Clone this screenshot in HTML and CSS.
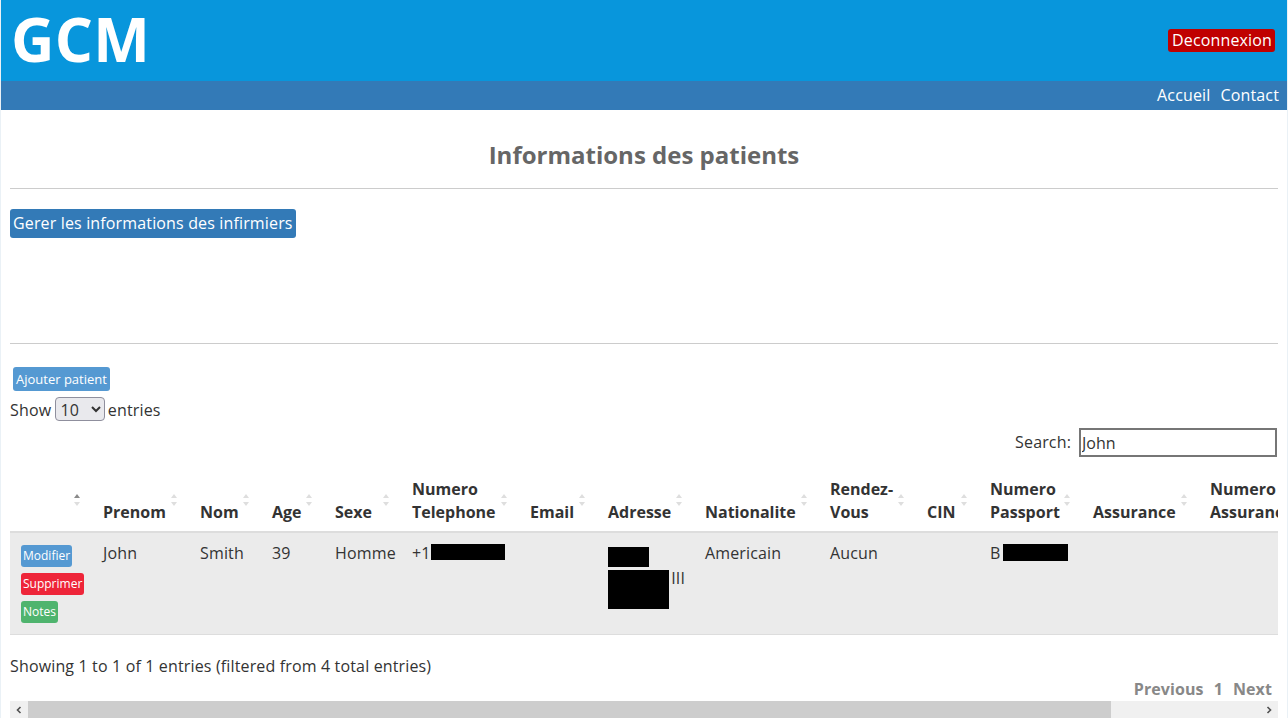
FILE: index.html
```html
<!DOCTYPE html>
<html lang="fr">
<head>
<meta charset="utf-8">
<title>GCM - Informations des patients</title>
<link rel="stylesheet" href="styles.css">
</head>
<body>
<div class="page">
  <header class="topbar">
    <h1 class="logo">GCM</h1>
    <a class="logout" href="#">Deconnexion</a>
  </header>
  <nav class="navbar">
    <a href="#">Accueil</a>
    <a href="#">Contact</a>
  </nav>
  <main class="content">
    <h2 class="title">Informations des patients</h2>
    <hr class="rule">
    <a class="btn-primary" href="#">Gerer les informations des infirmiers</a>
    <hr class="rule rule-low">
    <div class="dt-wrap">
      <a class="btn-add" href="#">Ajouter patient</a>
      <div class="dt-length">
        <label>Show <select><option>10</option><option>25</option><option>50</option></select> entries</label>
      </div>
      <div class="dt-filter">
        <label>Search:<input type="search" value="John"></label>
      </div>
      <div class="dt-scroll">
        <table class="dt">
          <colgroup>
            <col class="c1"><col class="c2"><col class="c3"><col class="c4"><col class="c5"><col class="c6"><col class="c7"><col class="c8"><col class="c9"><col class="c10"><col class="c11"><col class="c12"><col class="c13"><col class="c14"><col class="c15">
          </colgroup>
          <thead>
            <tr>
              <th class="sort-asc"></th>
              <th>Prenom</th>
              <th>Nom</th>
              <th>Age</th>
              <th>Sexe</th>
              <th>Numero Telephone</th>
              <th>Email</th>
              <th>Adresse</th>
              <th>Nationalite</th>
              <th>Rendez-Vous</th>
              <th>CIN</th>
              <th>Numero Passport</th>
              <th>Assurance</th>
              <th>Numero Assurance</th>
              <th>Allergies</th>
            </tr>
          </thead>
          <tbody>
            <tr>
              <td class="actions">
                <a class="mini mini-blue" href="#">Modifier</a>
                <a class="mini mini-red" href="#">Supprimer</a>
                <a class="mini mini-green" href="#">Notes</a>
              </td>
              <td>John</td>
              <td>Smith</td>
              <td>39</td>
              <td>Homme</td>
              <td>+1<span class="redact r-phone"></span></td>
              <td></td>
              <td class="addr">
                <div class="addr-line"><span class="redact r-a1"></span></div>
                <div class="addr-line"><span class="redact r-a2"></span><span class="addr-tail">III</span></div>
              </td>
              <td>Americain</td>
              <td>Aucun</td>
              <td></td>
              <td>B<span class="redact r-pass"></span></td>
              <td></td>
              <td></td>
              <td></td>
            </tr>
          </tbody>
        </table>
      </div>
      <div class="dt-info">Showing 1 to 1 of 1 entries (filtered from 4 total entries)</div>
      <div class="dt-paginate">
        <a href="#">Previous</a>
        <a href="#">1</a>
        <a href="#">Next</a>
      </div>
      <div class="hscroll">
        <span class="hs-btn">
          <svg width="8" height="8" viewBox="0 0 8 8"><path d="M5.5 1 L2.5 4 L5.5 7" fill="none" stroke="#505050" stroke-width="1.6"/></svg>
        </span>
        <span class="hs-thumb"></span>
        <span class="hs-track"></span>
        <span class="hs-btn">
          <svg width="8" height="8" viewBox="0 0 8 8"><path d="M2.5 1 L5.5 4 L2.5 7" fill="none" stroke="#505050" stroke-width="1.6"/></svg>
        </span>
      </div>
    </div>
  </main>
</div>
</body>
</html>
```

FILE: styles.css
```css
html, body {
  margin: 0;
  padding: 0;
  background: #ffffff;
}
body {
  font-family: "Open Sans", "Liberation Sans", sans-serif;
  font-size: 16px;
  color: #333333;
  line-height: 1.42857;
  letter-spacing: 0.15px;
  overflow: hidden;
}
a {
  text-decoration: none;
}
.page {
  width: 1286px;
  height: 718px;
  border-left: 1px solid #eaf1f6;
  border-right: 1px solid #eaf1f6;
  overflow: hidden;
}
.topbar {
  height: 81px;
  background: #0896dc;
  display: flex;
  align-items: center;
  justify-content: space-between;
  padding: 0 12px 0 10px;
}
.logo {
  margin: -4px 0 0 0;
  font-size: 60px;
  line-height: 80px;
  font-weight: 700;
  color: #ffffff;
  letter-spacing: 0.3px;
}
.logout {
  background: #c00000;
  color: #ffffff;
  font-size: 16px;
  line-height: 23px;
  padding: 0 3px 0 4px;
  border-radius: 3px;
}
.navbar {
  height: 29px;
  background: #337ab7;
  display: flex;
  justify-content: flex-end;
  align-items: center;
  gap: 10px;
  padding-right: 8px;
}
.navbar a {
  color: #ffffff;
  font-size: 16px;
  line-height: 23px;
}
.content {
  padding: 0 9px;
}
.title {
  margin: 28px 0 0 0;
  text-align: center;
  font-size: 24px;
  line-height: 33px;
  font-weight: 700;
  color: #666666;
  letter-spacing: 0;
}
.rule {
  border: 0;
  border-top: 1px solid #cccccc;
  margin: 17px 0 20px 0;
  height: 0;
}
.rule-low {
  margin: 105px 0 23px 0;
}
.btn-primary {
  display: inline-block;
  background: #337ab7;
  color: #ffffff;
  font-size: 16px;
  line-height: 23px;
  padding: 3px 3px;
  border-radius: 3px;
}
.dt-wrap {
  width: 1268px;
  overflow: hidden;
}
.btn-add {
  display: inline-block;
  margin-left: 3px;
  background: #5599d2;
  color: #ffffff;
  font-size: 13px;
  line-height: 18px;
  padding: 3px 3px;
  border-radius: 3px;
  letter-spacing: 0;
}
.dt-length {
  margin-top: 5px;
  height: 26px;
  display: flex;
  align-items: center;
}
.dt-length select {
  font-family: "Open Sans", "Liberation Sans", sans-serif;
  font-size: 16px;
  width: 50px;
  height: 24px;
  margin: 0 -1px;
  background: #e9e9ed;
  border: 1px solid #8f8f9d;
  border-radius: 4px;
  color: #333333;
  padding: 0 0 0 1px;
}
.dt-filter {
  margin-top: 6px;
  display: flex;
  justify-content: flex-end;
  padding-right: 1px;
}
.dt-filter label {
  display: flex;
  align-items: center;
}
.dt-filter input {
  font-family: "Open Sans", "Liberation Sans", sans-serif;
  font-size: 16px;
  width: 198px;
  height: 29px;
  box-sizing: border-box;
  border: 2px solid #767676;
  padding: 0 1px;
  margin-left: 8px;
  color: #333333;
  outline: none;
}
.dt-scroll {
  margin-top: 13px;
  overflow: hidden;
  width: 1268px;
}
.dt {
  width: 1432px;
  table-layout: fixed;
  border-collapse: collapse;
}
.c1 { width: 83px; }
.c2 { width: 97px; }
.c3 { width: 72px; }
.c4 { width: 63px; }
.c5 { width: 77px; }
.c6 { width: 118px; }
.c7 { width: 78px; }
.c8 { width: 97px; }
.c9 { width: 125px; }
.c10 { width: 97px; }
.c11 { width: 63px; }
.c12 { width: 103px; }
.c13 { width: 117px; }
.c14 { width: 112px; }
.c15 { width: 130px; }
.dt th {
  position: relative;
  text-align: left;
  vertical-align: bottom;
  font-weight: 700;
  padding: 8px 30px 7px 10px;
  border-bottom: 2px solid #dddddd;
  line-height: 23px;
  color: #333333;
  letter-spacing: 0;
  overflow: hidden;
}
.dt th::before,
.dt th::after {
  content: "";
  position: absolute;
  right: 13px;
  width: 0;
  height: 0;
  border-left: 3px solid transparent;
  border-right: 3px solid transparent;
}
.dt th::before {
  top: 24px;
  border-bottom: 4px solid #dedede;
}
.dt th::after {
  top: 32px;
  border-top: 4px solid #dedede;
}
.dt th.sort-asc::before {
  border-bottom-color: #8a8a8a;
}
.dt td {
  vertical-align: top;
  padding: 9px 10px 8px 10px;
  background: #ebebeb;
  border-bottom: 1px solid #dddddd;
  line-height: 23px;
  white-space: nowrap;
}
.dt td.actions {
  padding: 12px 10px 11px 11px;
}
.mini {
  display: block;
  width: fit-content;
  font-size: 12px;
  line-height: 16px;
  padding: 3px 2px;
  border-radius: 3px;
  color: #ffffff;
  margin-bottom: 6px;
  letter-spacing: 0;
}
.mini:last-child {
  margin-bottom: 0;
}
.mini-blue { background: #5599d2; }
.mini-red { background: #ee2539; }
.mini-green { background: #4fb46e; }
.redact {
  display: inline-block;
  background: #000000;
}
.r-phone {
  width: 74px;
  height: 16px;
  vertical-align: -1px;
}
.r-pass {
  width: 65px;
  height: 17px;
  vertical-align: -2px;
  margin-left: 2px;
}
.addr-line {
  display: flex;
  align-items: flex-start;
}
.r-a1 {
  width: 41px;
  height: 20px;
  margin-top: 5px;
}
.r-a2 {
  width: 65px;
  height: 39px;
  margin-top: 3px;
}
.addr-tail {
  margin-left: 2px;
  line-height: 23px;
}
.dt-info {
  margin-top: 20px;
  font-size: 16px;
  line-height: 23px;
}
.dt-paginate {
  display: flex;
  justify-content: flex-end;
  gap: 10px;
  padding-right: 6px;
  line-height: 23px;
  letter-spacing: 0.1px;
}
.dt-paginate a {
  color: #888888;
  font-weight: 700;
}
.hscroll {
  display: flex;
  height: 17px;
  background: #f0f0f0;
}
.hs-btn {
  width: 18px;
  display: flex;
  align-items: center;
  justify-content: center;
}
.hs-thumb {
  width: 1083px;
  background: #cdcdcd;
}
.hs-track {
  flex: 1;
}
```
